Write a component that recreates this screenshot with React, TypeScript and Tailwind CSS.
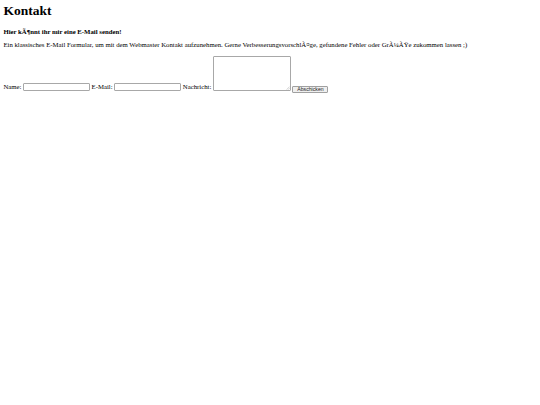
export default function App() {
  return (
    <div className="min-h-[405px] bg-white p-[3.4px] text-black" style={{ fontFamily: '"Liberation Serif", "Times New Roman", serif' }}>
      <h1 className="m-0 text-[13.5px] font-bold leading-[15.5px]">Kontakt</h1>
      <h4 className="mt-[9px] text-[6.75px] font-bold leading-[7.8px]">Hier kÃ¶nnt ihr mir eine E-Mail senden!</h4>
      <p className="mt-[5.6px] text-[6.75px] leading-[7.8px]">
        Ein klassisches E-Mail Formular, um mit dem Webmaster Kontakt aufzunehmen. Gerne VerbesserungsvorschlÃ¤ge, gefundene Fehler oder GrÃ¼ÃŸe zukommen lassen ;)
      </p>
      <form className="mt-[7px] flex items-end gap-[1.6px] text-[6.75px] leading-[7.8px]">
        <label htmlFor="name">Name:</label>
        <input
          id="name"
          type="text"
          className="h-[8px] w-[67px] rounded-[1px] border-[0.5px] border-[#a8a8a8] bg-white"
        />
        <label htmlFor="email">E-Mail:</label>
        <input
          id="email"
          type="text"
          className="h-[8px] w-[67px] rounded-[1px] border-[0.5px] border-[#a8a8a8] bg-white"
        />
        <label htmlFor="msg">Nachricht:</label>
        <div className="relative">
          <textarea
            id="msg"
            className="block h-[35px] w-[78px] resize-none rounded-[1px] border-[0.5px] border-[#a8a8a8] bg-white"
          />
          <svg className="absolute bottom-[1px] right-[1px]" width="4" height="4" viewBox="0 0 4 4">
            <path d="M3.6 0.6 L0.6 3.6 M3.6 2.2 L2.2 3.6" stroke="#a8a8a8" strokeWidth="0.5" />
          </svg>
        </div>
        <button
          type="button"
          className="mb-[-2px] h-[7.5px] w-[36px] rounded-[1px] border-[0.5px] border-[#a0a0a0] bg-[#efefef] text-[5.2px] leading-none text-[#222]"
          style={{ fontFamily: '"Liberation Sans", Arial, sans-serif' }}
        >
          Abschicken
        </button>
      </form>
    </div>
  );
}
